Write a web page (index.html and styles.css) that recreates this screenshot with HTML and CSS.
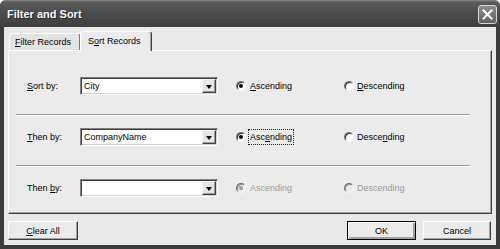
FILE: index.html
```html
<!DOCTYPE html>
<html>
<head>
<meta charset="utf-8">
<link rel="stylesheet" href="styles.css">
</head>
<body>
<div class="window">
  <div class="titlebar">
    <span class="title">Filter and Sort</span>
    <span class="close"><svg width="17" height="17" viewBox="0 0 17 17"><path d="M4.5 4.5 L12.5 12.5 M12.5 4.5 L4.5 12.5" stroke="#fff" stroke-width="2" stroke-linecap="square"/></svg></span>
  </div>
  <div class="body">
    <div class="tabs">
      <div class="tab"><u>F</u>ilter Records</div>
      <div class="tab active">S<u>o</u>rt Records</div>
    </div>
    <div class="panel">
      <div class="row">
        <span class="label"><u>S</u>ort by:</span>
        <div class="combo"><span class="value">City</span><span class="drop"></span></div>
        <div class="opt"><span class="radio checked"></span><span class="text"><u>A</u>scending</span></div>
        <div class="opt"><span class="radio"></span><span class="text"><u>D</u>escending</span></div>
      </div>
      <div class="sep"></div>
      <div class="row">
        <span class="label"><u>T</u>hen by:</span>
        <div class="combo"><span class="value">CompanyName</span><span class="drop"></span></div>
        <div class="opt"><span class="radio checked"></span><span class="text focus">Asc<u>e</u>nding</span></div>
        <div class="opt"><span class="radio"></span><span class="text">Desce<u>n</u>ding</span></div>
      </div>
      <div class="sep"></div>
      <div class="row">
        <span class="label">Then <u>b</u>y:</span>
        <div class="combo"><span class="value"></span><span class="drop"></span></div>
        <div class="opt disabled"><span class="radio checked"></span><span class="text">Ascending</span></div>
        <div class="opt disabled"><span class="radio"></span><span class="text">Descending</span></div>
      </div>
    </div>
    <div class="footer">
      <div class="btn clear"><span><u>C</u>lear All</span></div>
      <div class="spacer"></div>
      <div class="btn default"><span>OK</span></div>
      <div class="btn cancel"><span>Cancel</span></div>
    </div>
  </div>
</div>
</body>
</html>
```
FILE: styles.css
```css
html, body {
  margin: 0;
  padding: 0;
}
body {
  width: 500px;
  height: 249px;
  overflow: hidden;
  background: #ffffff;
  font-family: "Liberation Sans", Arial, sans-serif;
  font-size: 9px;
  color: #000;
}
u {
  text-decoration: underline;
  text-underline-offset: 1px;
}
.window {
  width: 500px;
  height: 249px;
  display: flex;
  flex-direction: column;
  background: #3c3c3c;
  border-radius: 6px 6px 0 0;
  overflow: hidden;
}
.titlebar {
  height: 27px;
  flex: none;
  display: flex;
  align-items: center;
  padding: 0 3px 0 7px;
  background: linear-gradient(#8a8a8a 0px, #5c5c5c 2px, #4e4e4e 40%, #454545 75%, #3f3f3f 100%);
}
.title {
  flex: 1;
  color: #f6f6f6;
  font-weight: bold;
  font-size: 11px;
  text-shadow: 1px 1px 0 #2a2a2a;
  padding-top: 1px;
}
.close {
  width: 19px;
  height: 19px;
  box-sizing: border-box;
  border: 1px solid #d8d8d8;
  border-radius: 3px;
  background: linear-gradient(#8c8c8c, #626262);
  display: flex;
  align-items: center;
  justify-content: center;
  margin-top: 1px;
}
.body {
  flex: 1;
  margin: 0 4px 4px 4px;
  background: #e9e9e9;
  padding: 4px 4px 5px 4px;
  display: flex;
  flex-direction: column;
}
.tabs {
  height: 19px;
  flex: none;
  display: flex;
  align-items: flex-end;
  position: relative;
  z-index: 1;
}
.tab {
  box-sizing: border-box;
  width: 71px;
  height: 17px;
  margin-left: 1px;
  padding-left: 5px;
  display: flex;
  align-items: center;
  border-top: 1px solid #ffffff;
  border-left: 1px solid #ffffff;
  border-right: 1px solid #7a7a7a;
  border-radius: 3px 3px 0 0;
  background: #e4e4e4;
}
.tab.active {
  margin-left: 0;
  width: 72px;
  height: 20px;
  margin-bottom: -1px;
  padding-left: 7px;
  padding-bottom: 1px;
  background: #ebebeb;
  border-right: 1px solid #404040;
  box-shadow: inset -1px 0 0 #a0a0a0;
}
.panel {
  flex: 1;
  box-sizing: border-box;
  background: #ebebeb;
  border-top: 1px solid #ffffff;
  border-left: 1px solid #ffffff;
  border-right: 1px solid #404040;
  border-bottom: 1px solid #404040;
  box-shadow: inset -1px -1px 0 #a0a0a0;
  padding: 26px 0 0 18px;
  display: flex;
  flex-direction: column;
}
.row {
  height: 18px;
  display: flex;
  align-items: center;
}
.label {
  width: 53px;
  flex: none;
}
.combo {
  width: 138px;
  height: 18px;
  flex: none;
  box-sizing: border-box;
  background: #ffffff;
  border: 1px solid;
  border-color: #808080 #ffffff #ffffff #808080;
  box-shadow: inset 1px 1px 0 #404040, inset -1px -1px 0 #d4d4d4;
  display: flex;
  align-items: center;
  padding: 0 1px 0 2px;
}
.value {
  flex: 1;
  padding-left: 1px;
}
.drop {
  width: 14px;
  height: 14px;
  box-sizing: border-box;
  background: #e6e6e6;
  border: 1px solid;
  border-color: #f4f4f4 #404040 #404040 #f4f4f4;
  box-shadow: inset -1px -1px 0 #9a9a9a;
  display: flex;
  align-items: center;
  justify-content: center;
}
.drop::after {
  content: "";
  width: 0;
  height: 0;
  border-left: 3.5px solid transparent;
  border-right: 3.5px solid transparent;
  border-top: 4px solid #000;
  margin-top: 1px;
}
.opt {
  display: flex;
  align-items: center;
  width: 108px;
  flex: none;
}
.row .combo + .opt {
  margin-left: 18px;
}
.radio {
  width: 10px;
  height: 10px;
  flex: none;
  box-sizing: border-box;
  border-radius: 50%;
  background: #ffffff;
  border: 1px solid;
  border-color: #707070 #f8f8f8 #f8f8f8 #707070;
  box-shadow: inset 1px 1px 0 #303030;
  margin-right: 4px;
  display: flex;
  align-items: center;
  justify-content: center;
}
.radio.checked::after {
  content: "";
  width: 4px;
  height: 4px;
  border-radius: 50%;
  background: #000;
}
.opt + .opt .radio {
  margin-right: 3px;
}
.focus {
  border: 1px dotted #222;
  padding: 2px 1px;
  margin: -3px -2px;
}
.disabled .text {
  color: #9c9c9c;
}
.disabled .radio {
  background: #ececec;
  box-shadow: inset 1px 1px 0 #8a8a8a;
}
.disabled .radio.checked::after {
  background: #a0a0a0;
}
.sep {
  height: 0;
  border-top: 1px solid #a0a0a0;
  border-bottom: 1px solid #ffffff;
  margin: 19px 21px 12px -11px;
}
.footer {
  height: 19px;
  margin-top: 7px;
  flex: none;
  display: flex;
}
.spacer {
  flex: 1;
}
.btn {
  box-sizing: border-box;
  height: 19px;
  background: #ebebeb;
  border: 1px solid;
  border-color: #ffffff #404040 #404040 #ffffff;
  box-shadow: inset -1px -1px 0 #a0a0a0;
  display: flex;
  align-items: center;
  justify-content: center;
}
.btn.clear {
  width: 70px;
}
.btn.default {
  width: 69px;
  border: 1px solid #000;
  box-shadow: inset 1px 1px 0 #ffffff, inset -2px -2px 0 #a0a0a0, inset -1px -1px 0 #404040;
}
.btn.cancel {
  width: 68px;
  margin-left: 7px;
  margin-right: 1px;
}
```
